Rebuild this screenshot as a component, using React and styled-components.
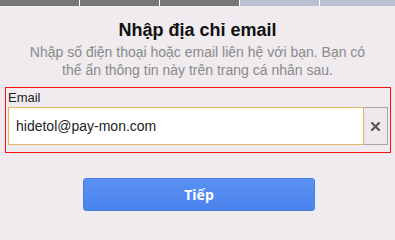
import React, { useState } from "react";
import styled, { createGlobalStyle } from "styled-components";

const GlobalStyle = createGlobalStyle`
  html, body {
    margin: 0;
    padding: 0;
    background: #efebef;
    font-family: "Liberation Sans", Arial, sans-serif;
  }
`;

const Page = styled.div`
  width: 395px;
  height: 217px;
  overflow: hidden;
  background: #efebef;
`;

const Progress = styled.div`
  display: flex;
  gap: 1px;
  height: 6px;
  background: #ffffff;
`;

const Step = styled.div`
  flex: 0 0 ${(p) => p.w}px;
  background: ${(p) => (p.done ? "#777875" : "#b9c0cf")};
`;

const Title = styled.h1`
  margin: 13px 0 0;
  text-align: center;
  font-size: 18px;
  line-height: 22px;
  font-weight: bold;
  color: #111;
`;

const Subtitle = styled.p`
  margin: 2px 0 0;
  text-align: center;
  font-size: 14px;
  line-height: 18px;
  color: #8a8a8a;
`;

const FieldBox = styled.div`
  margin: 8px 4px 0 5px;
  border: 1px solid #ff1010;
  padding: 2px 2px 7px 2px;
`;

const Label = styled.label`
  display: block;
  font-size: 13px;
  line-height: 15px;
  color: #222;
  margin-bottom: 2px;
`;

const InputRow = styled.div`
  display: flex;
  height: 38px;
`;

const Input = styled.input`
  flex: 1;
  min-width: 0;
  box-sizing: border-box;
  height: 38px;
  border: 1px solid #e2b464;
  background: #fff;
  padding: 0 7px;
  font-family: "Liberation Sans", Arial, sans-serif;
  font-size: 14px;
  color: #222;
  outline: none;
  caret-color: #000;
`;

const ClearButton = styled.button`
  flex: 0 0 24px;
  box-sizing: border-box;
  height: 38px;
  border: 1px solid #a9a9a9;
  border-left: none;
  background: #ece8ec;
  color: #5a5a5a;
  padding: 0;
  display: flex;
  align-items: center;
  justify-content: center;
  cursor: pointer;
`;

const Actions = styled.div`
  display: flex;
  justify-content: center;
  margin-top: 25px;
  padding-left: 3px;
`;

const NextButton = styled.button`
  width: 232px;
  height: 33px;
  border: 1px solid #4a7fe0;
  border-radius: 3px;
  background: linear-gradient(#5b91f4, #4a83ec);
  color: #fff;
  font-family: "Open Sans", sans-serif;
  font-size: 14px;
  font-weight: bold;
  cursor: pointer;
`;

const steps = [
  { w: 79, done: true },
  { w: 79, done: true },
  { w: 79, done: true },
  { w: 79, done: false },
  { w: 75, done: false },
];

export default function App() {
  const [email, setEmail] = useState("hidetol@pay-mon.com");

  return (
    <Page>
      <GlobalStyle />
      <Progress>
        {steps.map((s, i) => (
          <Step key={i} w={s.w} done={s.done} />
        ))}
      </Progress>
      <Title>Nhập địa chỉ email</Title>
      <Subtitle>
        Nhập số điện thoại hoặc email liên hệ với bạn. Bạn có
        <br />
        thể ẩn thông tin này trên trang cá nhân sau.
      </Subtitle>
      <FieldBox>
        <Label htmlFor="email">Email</Label>
        <InputRow>
          <Input
            id="email"
            value={email}
            onChange={(e) => setEmail(e.target.value)}
            autoFocus
          />
          <ClearButton aria-label="Xóa" onClick={() => setEmail("")}>
            <svg width="9" height="9" viewBox="0 0 9 9">
              <path
                d="M1 1L8 8M8 1L1 8"
                stroke="#555"
                strokeWidth="2.2"
                strokeLinecap="square"
              />
            </svg>
          </ClearButton>
        </InputRow>
      </FieldBox>
      <Actions>
        <NextButton>Tiếp</NextButton>
      </Actions>
    </Page>
  );
}
